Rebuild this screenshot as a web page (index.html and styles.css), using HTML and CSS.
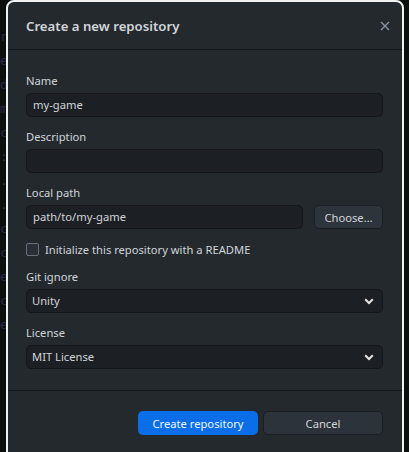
FILE: index.html
```html
<!DOCTYPE html>
<html>
<head>
<meta charset="utf-8">
<link rel="stylesheet" href="styles.css">
</head>
<body>
<div class="backdrop">
  <span class="bg-line">r</span>
  <span class="bg-line">e</span>
  <span class="bg-line">d</span>
  <span class="bg-line">m</span>
  <span class="bg-line">c</span>
  <span class="bg-line">:</span>
  <span class="bg-line">.</span>
  <span class="bg-line">.</span>
  <span class="bg-line">c</span>
  <span class="bg-line">c</span>
  <span class="bg-line">e</span>
  <span class="bg-line">c</span>
  <span class="bg-line">e</span>
</div>
<div class="dialog">
  <header class="dialog-header">
    <h1 class="dialog-title">Create a new repository</h1>
    <svg class="close" width="10" height="10" viewBox="0 0 10 10"><path d="M1 1L9 9M9 1L1 9" stroke="#8b949e" stroke-width="1.4" fill="none"/></svg>
  </header>
  <form class="dialog-body">
    <div class="field">
      <label class="label">Name</label>
      <div class="input">my-game</div>
    </div>
    <div class="field">
      <label class="label">Description</label>
      <div class="input"></div>
    </div>
    <div class="field">
      <label class="label">Local path</label>
      <div class="path-row">
        <div class="input grow">path/to/my-game</div>
        <div class="btn choose">Choose…</div>
      </div>
    </div>
    <div class="check-row">
      <span class="checkbox"></span>
      <span class="check-label">Initialize this repository with a README</span>
    </div>
    <div class="field">
      <label class="label">Git ignore</label>
      <div class="input select"><span>Unity</span>
        <svg class="chev" width="10" height="7" viewBox="0 0 10 7"><path d="M1.2 1.3L5 5L8.8 1.3" stroke="#e6e6e6" stroke-width="2" fill="none"/></svg>
      </div>
    </div>
    <div class="field">
      <label class="label">License</label>
      <div class="input select"><span>MIT License</span>
        <svg class="chev" width="10" height="7" viewBox="0 0 10 7"><path d="M1.2 1.3L5 5L8.8 1.3" stroke="#e6e6e6" stroke-width="2" fill="none"/></svg>
      </div>
    </div>
  </form>
  <footer class="dialog-footer">
    <div class="btn primary">Create repository</div>
    <div class="btn secondary">Cancel</div>
  </footer>
</div>
</body>
</html>
```
FILE: styles.css
```css
* { box-sizing: border-box; }
html, body {
  margin: 0;
  padding: 0;
  width: 409px;
  height: 452px;
  overflow: hidden;
  background: #0b100e;
  font-family: "Noto Sans", "Open Sans", sans-serif;
  font-size: 11.2px;
  color: #d1d5da;
}
.backdrop {
  display: flex;
  flex-direction: column;
  padding-top: 30px;
  gap: 10px;
  font-family: "DejaVu Sans Mono", monospace;
  font-size: 13px;
  line-height: 14px;
  color: #2e2842;
}
.bg-line { display: block; margin-left: 0; }
.dialog {
  position: absolute;
  left: 6px;
  top: 0;
  width: 398px;
  height: 470px;
  background: #24292e;
  border: 2px solid #f2f2f2;
  border-radius: 8px;
  display: flex;
  flex-direction: column;
}
.dialog-header {
  height: 48px;
  flex: none;
  display: flex;
  align-items: center;
  justify-content: space-between;
  padding: 0 12px 0 18px;
  border-bottom: 1px solid #15181b;
}
.dialog-title {
  margin: 0;
  font-size: 13.2px;
  font-weight: 600;
  color: #d1d5da;
}
.close { margin-top: 1px; }
.dialog-body {
  margin: 0;
  padding: 23px 19px 21px 18px;
  display: flex;
  flex-direction: column;
  gap: 12px;
  border-bottom: 1px solid #15181b;
}
.field { display: flex; flex-direction: column; gap: 4px; }
.label { line-height: 16px; display: block; }
.input {
  height: 24px;
  background: #1c1f23;
  border: 1px solid #141619;
  border-radius: 5px;
  padding: 0 6px;
  line-height: 22px;
  color: #d1d5da;
}
.path-row { display: flex; gap: 11px; }
.grow { flex: 1; }
.btn {
  height: 24px;
  border-radius: 5px;
  display: flex;
  align-items: center;
  justify-content: center;
}
.choose {
  width: 69px;
  background: #2e343b;
  border: 1px solid #1a1d21;
}
.check-row { display: flex; align-items: center; height: 16px; gap: 6px; }
.checkbox {
  width: 13px;
  height: 13px;
  border: 1px solid #6a7078;
  border-radius: 2px;
  background: #2a2f35;
}
.select {
  display: flex;
  align-items: center;
  justify-content: space-between;
  padding: 0 8px 0 5px;
}
.dialog-footer {
  display: flex;
  justify-content: flex-end;
  gap: 5px;
  padding: 20px 19px 0 0;
}
.primary {
  width: 120px;
  background: #0a6ee8;
  color: #f0f6fc;
}
.secondary {
  width: 120px;
  background: #2d333b;
  border: 1px solid #1a1d21;
}
```
